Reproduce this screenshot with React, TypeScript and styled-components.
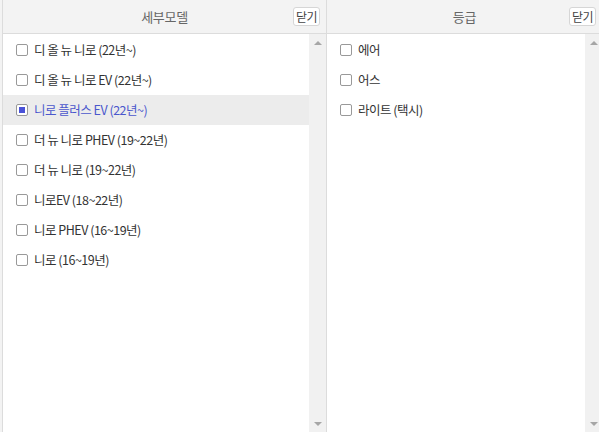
import styled, { createGlobalStyle } from "styled-components"

const GlobalStyle = createGlobalStyle`
  html, body {
    margin: 0;
    padding: 0;
    overflow: hidden;
    background: #ffffff;
  }
  body {
    font-family: "Noto Sans CJK KR", "Noto Sans", sans-serif;
  }
`

const Layout = styled.div`
  display: grid;
  grid-template-columns: 324px 276px;
  width: 602px;
  height: 432px;
  padding-left: 2px;
  background: #f3f3f3;
`

const Panel = styled.section`
  display: flex;
  flex-direction: column;
  min-height: 0;
  border-left: 1px solid #dcdcdc;
  background: #ffffff;
`

const Header = styled.header`
  position: relative;
  display: flex;
  align-items: center;
  justify-content: center;
  height: 33px;
  border-bottom: 1px solid #dcdcdc;
  background: #f3f3f3;
  color: #666666;
  font-size: 13px;
  letter-spacing: -0.3px;
`

const CloseButton = styled.button`
  position: absolute;
  top: 7px;
  right: 6px;
  height: 19px;
  width: 27px;
  padding: 0;
  border: 1px solid #d6d6d6;
  border-radius: 3px;
  background: #ffffff;
  color: #444444;
  font-family: inherit;
  font-size: 12px;
  line-height: 17px;
  letter-spacing: -0.5px;
  cursor: pointer;
`

const Body = styled.div`
  flex: 1;
  display: flex;
  min-height: 0;
`

const List = styled.ul`
  flex: 1;
  margin: 0;
  padding: 1px 0 0;
  list-style: none;
`

const Item = styled.li<{ $selected?: boolean }>`
  box-sizing: border-box;
  display: flex;
  align-items: center;
  gap: 6px;
  height: 30px;
  padding: 0 0 1px 13px;
  background: ${(p) => (p.$selected ? "#ececec" : "transparent")};
  color: ${(p) => (p.$selected ? "#4b57cc" : "#333333")};
  font-size: 12.5px;
  letter-spacing: -0.5px;
  cursor: pointer;
`

const Check = styled.span<{ $checked?: boolean }>`
  box-sizing: border-box;
  flex-shrink: 0;
  display: flex;
  align-items: center;
  justify-content: center;
  width: 12px;
  height: 12px;
  margin-top: 1px;
  border: 1px solid #999999;
  border-radius: 2px;
  background: #ffffff;
  &::after {
    content: "";
    display: ${(p) => (p.$checked ? "block" : "none")};
    width: 6px;
    height: 6px;
    background: #4a52d8;
  }
`

const Scrollbar = styled.div`
  width: 17px;
  display: flex;
  flex-direction: column;
  justify-content: space-between;
  align-items: center;
  padding: 7px 0 6px;
  background: #f1f1f1;
`

const Arrow = styled.span<{ $down?: boolean }>`
  width: 0;
  height: 0;
  border-left: 4px solid transparent;
  border-right: 4px solid transparent;
  ${(p) =>
    p.$down
      ? "border-top: 4px solid #a6a6a6;"
      : "border-bottom: 4px solid #a6a6a6;"}
`

const models = [
  "디 올 뉴 니로 (22년~)",
  "디 올 뉴 니로 EV (22년~)",
  "니로 플러스 EV (22년~)",
  "더 뉴 니로 PHEV (19~22년)",
  "더 뉴 니로 (19~22년)",
  "니로EV (18~22년)",
  "니로 PHEV (16~19년)",
  "니로 (16~19년)",
]

const grades = ["에어", "어스", "라이트 (택시)"]

function SelectPanel({ title, items, selected }: { title: string; items: string[]; selected?: string }) {
  return (
    <Panel>
      <Header>
        {title}
        <CloseButton>닫기</CloseButton>
      </Header>
      <Body>
        <List>
          {items.map((name) => (
            <Item key={name} $selected={name === selected}>
              <Check $checked={name === selected} />
              {name}
            </Item>
          ))}
        </List>
        <Scrollbar>
          <Arrow />
          <Arrow $down />
        </Scrollbar>
      </Body>
    </Panel>
  )
}

export default function App() {
  return (
    <>
      <GlobalStyle />
      <Layout>
        <SelectPanel title="세부모델" items={models} selected="니로 플러스 EV (22년~)" />
        <SelectPanel title="등급" items={grades} />
      </Layout>
    </>
  )
}
